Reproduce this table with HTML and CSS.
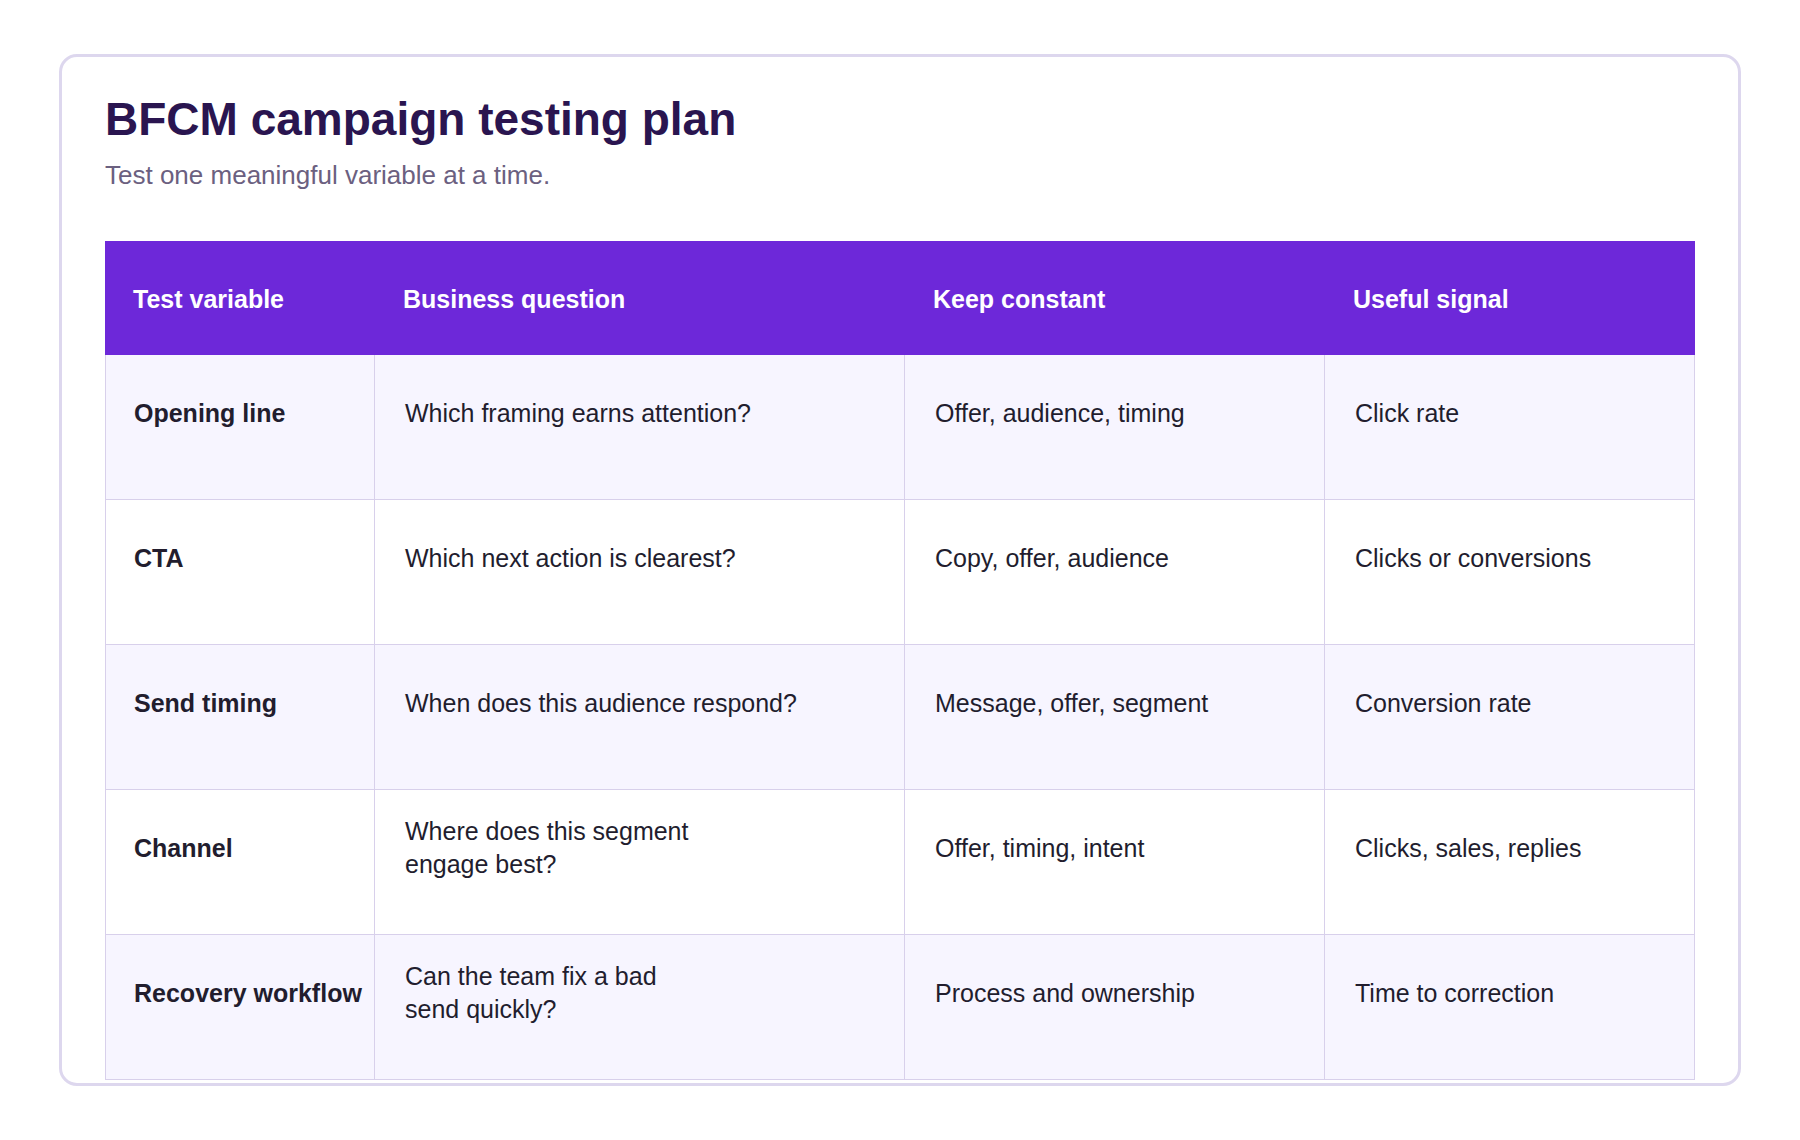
FILE: index.html
```html
<!DOCTYPE html>
<html lang="en">
<head>
<meta charset="utf-8">
<title>BFCM campaign testing plan</title>
<link rel="stylesheet" href="styles.css">
</head>
<body>
  <main class="card">
    <h1 class="title">BFCM campaign testing plan</h1>
    <p class="subtitle">Test one meaningful variable at a time.</p>
    <table class="plan">
      <colgroup>
        <col class="c-var">
        <col class="c-question">
        <col class="c-constant">
        <col class="c-signal">
      </colgroup>
      <thead>
        <tr>
          <th>Test variable</th>
          <th>Business question</th>
          <th>Keep constant</th>
          <th>Useful signal</th>
        </tr>
      </thead>
      <tbody>
        <tr class="alt">
          <td class="var">Opening line</td>
          <td>Which framing earns attention?</td>
          <td>Offer, audience, timing</td>
          <td>Click rate</td>
        </tr>
        <tr>
          <td class="var">CTA</td>
          <td>Which next action is clearest?</td>
          <td>Copy, offer, audience</td>
          <td>Clicks or conversions</td>
        </tr>
        <tr class="alt">
          <td class="var">Send timing</td>
          <td>When does this audience respond?</td>
          <td>Message, offer, segment</td>
          <td>Conversion rate</td>
        </tr>
        <tr>
          <td class="var">Channel</td>
          <td>Where does this segment<br>engage best?</td>
          <td>Offer, timing, intent</td>
          <td>Clicks, sales, replies</td>
        </tr>
        <tr class="alt">
          <td class="var">Recovery workflow</td>
          <td>Can the team fix a bad<br>send quickly?</td>
          <td>Process and ownership</td>
          <td>Time to correction</td>
        </tr>
      </tbody>
    </table>
  </main>
</body>
</html>
```

FILE: styles.css
```css
html, body {
  margin: 0;
  padding: 0;
  background: #ffffff;
}

body {
  padding: 54px 59px 55px;
  font-family: "Liberation Sans", Arial, Helvetica, sans-serif;
  color: #221d2e;
}

.card {
  display: block;
  border: 3px solid #ddd7ee;
  border-radius: 18px;
  padding: 36px 43px 3px;
  background: #ffffff;
}

.title {
  margin: 0;
  font-size: 46px;
  line-height: 1.15;
  font-weight: 700;
  color: #2a1550;
}

.subtitle {
  margin: 11px 0 0;
  font-size: 26px;
  line-height: 1.4;
  color: #6b6080;
}

.plan {
  margin-top: 48px;
  width: 100%;
  table-layout: fixed;
  border-collapse: separate;
  border-spacing: 0;
  font-size: 25px;
  line-height: 1.333;
}

.c-var { width: 270px; }
.c-question { width: 530px; }
.c-constant { width: 420px; }
.c-signal { width: 370px; }

.plan thead tr {
  height: 114px;
}

.plan th {
  background: #6d28d9;
  color: #ffffff;
  font-weight: 700;
  text-align: left;
  vertical-align: middle;
  padding: 3px 28px 0;
  border: none;
}

.plan tbody tr {
  height: 145px;
  background: #ffffff;
}

.plan tbody tr.alt {
  background: #f7f5ff;
}

.plan td {
  vertical-align: middle;
  padding: 21px 28px 49px 30px;
  border-right: 1px solid #d8d0eb;
  border-bottom: 1px solid #d8d0eb;
  color: #221d2e;
}

.plan td:first-child {
  border-left: 1px solid #d8d0eb;
  padding-left: 28px;
  padding-right: 8px;
}

.plan td.var {
  font-weight: 700;
  white-space: nowrap;
}
```
